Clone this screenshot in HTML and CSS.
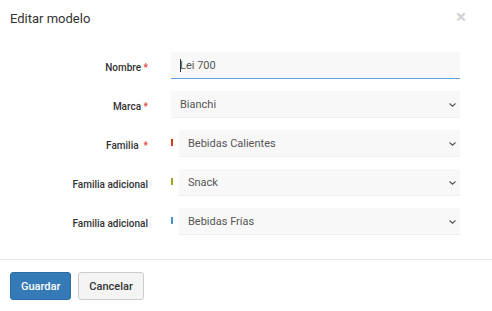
FILE: index.html
```html
<!DOCTYPE html>
<html lang="es">
<head>
    <meta charset="utf-8">
    <title>Editar modelo</title>
    <link rel="stylesheet" href="styles.css">
</head>
<body>
    <div class="modal">
        <div class="modal-header">
            <h4 class="modal-title">Editar modelo</h4>
            <span class="close">&times;</span>
        </div>
        <div class="modal-body">
            <div class="form-row">
                <label class="form-label">Nombre <span class="req">*</span></label>
                <div class="field field-input">
                    <span class="caret"></span>
                    <input type="text" class="text-input" value="Lei 700">
                </div>
            </div>
            <div class="form-row">
                <label class="form-label">Marca <span class="req">*</span></label>
                <div class="field field-select">
                    <span class="select-text">Bianchi</span>
                    <svg class="chevron" width="7" height="4" viewBox="0 0 7 4"><path d="M0.5 0.5 L3.5 3.2 L6.5 0.5" fill="none" stroke="#555" stroke-width="1.1"/></svg>
                </div>
            </div>
            <div class="form-row">
                <label class="form-label">Familia &nbsp;<span class="req">*</span></label>
                <div class="family">
                    <span class="swatch swatch-red"></span>
                    <div class="field field-select">
                        <span class="select-text">Bebidas Calientes</span>
                        <svg class="chevron" width="7" height="4" viewBox="0 0 7 4"><path d="M0.5 0.5 L3.5 3.2 L6.5 0.5" fill="none" stroke="#555" stroke-width="1.1"/></svg>
                    </div>
                </div>
            </div>
            <div class="form-row">
                <label class="form-label">Familia adicional</label>
                <div class="family">
                    <span class="swatch swatch-olive"></span>
                    <div class="field field-select">
                        <span class="select-text">Snack</span>
                        <svg class="chevron" width="7" height="4" viewBox="0 0 7 4"><path d="M0.5 0.5 L3.5 3.2 L6.5 0.5" fill="none" stroke="#555" stroke-width="1.1"/></svg>
                    </div>
                </div>
            </div>
            <div class="form-row">
                <label class="form-label">Familia adicional</label>
                <div class="family">
                    <span class="swatch swatch-blue"></span>
                    <div class="field field-select">
                        <span class="select-text">Bebidas Frías</span>
                        <svg class="chevron" width="7" height="4" viewBox="0 0 7 4"><path d="M0.5 0.5 L3.5 3.2 L6.5 0.5" fill="none" stroke="#555" stroke-width="1.1"/></svg>
                    </div>
                </div>
            </div>
        </div>
        <div class="modal-footer">
            <button class="btn btn-primary">Guardar</button>
            <button class="btn btn-default">Cancelar</button>
        </div>
    </div>
</body>
</html>
```

FILE: styles.css
```css
body {
    margin: 0;
    font-family: Roboto, "Liberation Sans", sans-serif;
    color: #333;
    background: #fff;
}
.modal {
    width: 492px;
}
.modal-header {
    display: flex;
    justify-content: space-between;
    align-items: center;
    height: 37px;
    padding: 0 26px 0 10px;
}
.modal-title {
    margin: 0;
    font-size: 13px;
    font-weight: 400;
    color: #333;
}
.close {
    font-size: 19px;
    font-weight: 700;
    color: #d4d4d4;
    line-height: 1;
    margin-top: -4px;
}
.modal-body {
    display: flex;
    flex-direction: column;
    gap: 12px;
    padding: 15px 32px 24px 10px;
}
.form-row {
    display: grid;
    grid-template-columns: 138px 1fr;
    column-gap: 23px;
    align-items: center;
}
.form-label {
    text-align: right;
    font-size: 10px;
    font-weight: 500;
    color: #333;
    padding-top: 4px;
}
.req {
    color: #e0403a;
}
.field {
    position: relative;
    display: flex;
    align-items: center;
    height: 26px;
    background: #f8f8f8;
    border-bottom: 1px solid #efefef;
    font-size: 11px;
    color: #555;
}
.field-input {
    border-bottom: 1px solid #62a0de;
}
.text-input {
    width: 100%;
    height: 26px;
    border: 0;
    padding: 0 0 0 9px;
    background: transparent;
    font-family: Roboto, "Liberation Sans", sans-serif;
    font-size: 11px;
    color: #555;
    outline: none;
}
.caret {
    position: absolute;
    left: 9px;
    top: 7px;
    width: 1px;
    height: 13px;
    background: #333;
}
.field-select {
    justify-content: space-between;
    padding: 0 4px 0 9px;
}
.select-text {
    padding-top: 1px;
}
.chevron {
    display: block;
    margin-top: 1px;
}
.family {
    display: flex;
    align-items: flex-start;
    gap: 6px;
}
.family .field {
    flex: 1;
}
.swatch {
    width: 2px;
    height: 7px;
    margin-top: 9px;
}
.swatch-red {
    background: #d63a1c;
}
.swatch-olive {
    background: #a3a51c;
}
.swatch-blue {
    background: #4c93d6;
}
.modal-footer {
    display: flex;
    gap: 7px;
    padding: 12px 10px;
    border-top: 1px solid #e5e5e5;
}
.btn {
    height: 28px;
    padding: 0 10px;
    border-radius: 3px;
    font-family: Roboto, "Liberation Sans", sans-serif;
    font-size: 11px;
    font-weight: 500;
    cursor: pointer;
}
.btn-primary {
    background: #337ab7;
    border: 1px solid #2e6da4;
    color: #fff;
}
.btn-default {
    background: #f4f4f4;
    border: 1px solid #ccc;
    color: #333;
}
```
